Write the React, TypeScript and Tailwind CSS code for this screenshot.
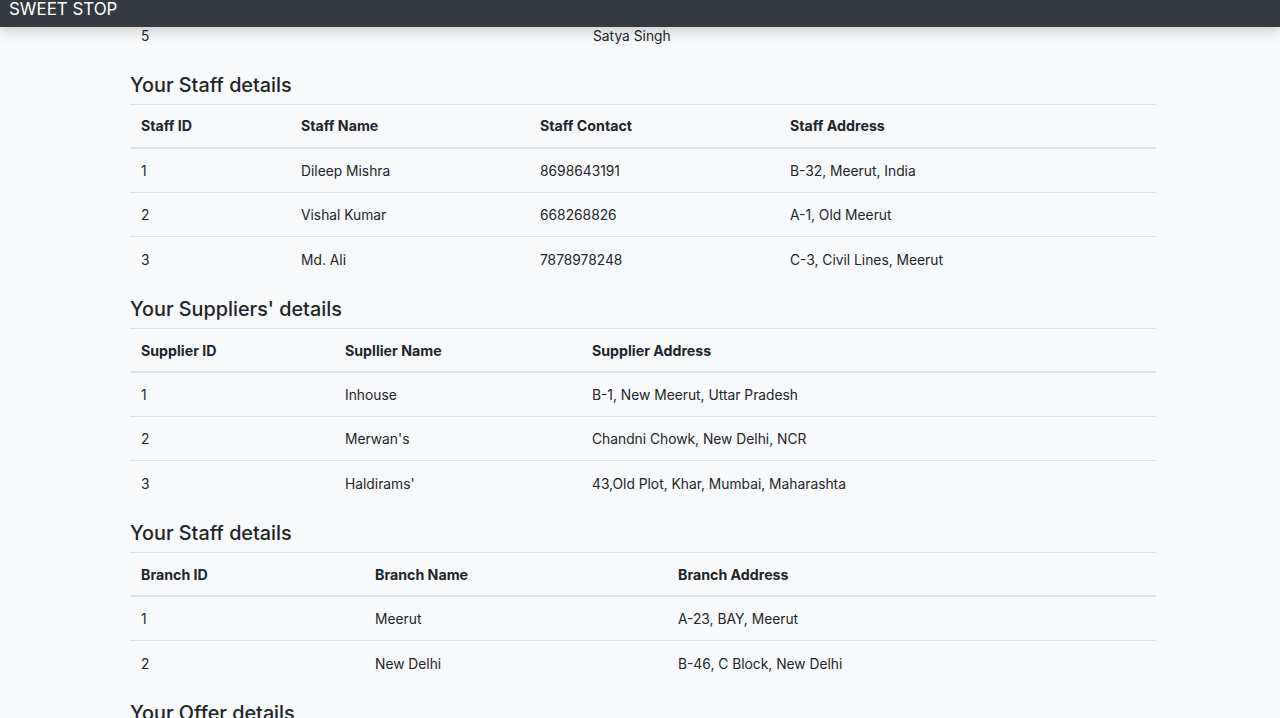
import React from "react";

type Table = {
  title?: string;
  cols: string[];
  widths: string;
  rows: string[][];
};

const tables: Table[] = [
  {
    title: "Your Staff details",
    cols: ["Staff ID", "Staff Name", "Staff Contact", "Staff Address"],
    widths: "160px 239px 250px 1fr",
    rows: [
      ["1", "Dileep Mishra", "8698643191", "B-32, Meerut, India"],
      ["2", "Vishal Kumar", "668268826", "A-1, Old Meerut"],
      ["3", "Md. Ali", "7878978248", "C-3, Civil Lines, Meerut"],
    ],
  },
  {
    title: "Your Suppliers' details",
    cols: ["Supplier ID", "Supllier Name", "Supplier Address"],
    widths: "204px 247px 1fr",
    rows: [
      ["1", "Inhouse", "B-1, New Meerut, Uttar Pradesh"],
      ["2", "Merwan's", "Chandni Chowk, New Delhi, NCR"],
      ["3", "Haldirams'", "43,Old Plot, Khar, Mumbai, Maharashta"],
    ],
  },
  {
    title: "Your Staff details",
    cols: ["Branch ID", "Branch Name", "Branch Address"],
    widths: "234px 303px 1fr",
    rows: [
      ["1", "Meerut", "A-23, BAY, Meerut"],
      ["2", "New Delhi", "B-46, C Block, New Delhi"],
    ],
  },
];

function DataTable({ t }: { t: Table }) {
  return (
    <div className="mb-[14.5px]">
      {/* header */}
      <div
        className="grid h-[45px] items-center border-t border-b-2 border-[#dee2e6] text-[14.2px] font-bold"
        style={{ gridTemplateColumns: t.widths }}
      >
        {t.cols.map((c) => (
          <div key={c} className="px-[11px] pt-[1px]">
            {c}
          </div>
        ))}
      </div>
      {/* body */}
      <div className="divide-y divide-[#dee2e6]">
        {t.rows.map((r, i) => (
          <div
            key={i}
            className="grid h-[44px] items-center"
            style={{ gridTemplateColumns: t.widths }}
          >
            {r.map((cell, j) => (
              <div key={j} className="px-[11px] pt-[3px]">
                {cell}
              </div>
            ))}
          </div>
        ))}
      </div>
    </div>
  );
}

export default function App() {
  return (
    <div className="relative h-[718px] overflow-hidden bg-[#f8f9fa] text-[#212529] font-['Inter','Liberation_Sans',sans-serif] text-[13.8px]">
      {/* Navbar */}
      <div className="absolute top-0 left-0 right-0 z-10 h-[27px] bg-[#343a40] pl-[9px] shadow-[0_4px_14px_rgba(0,0,0,0.18)]">
        <span className="text-[16.9px] leading-[19px] text-white">SWEET STOP</span>
      </div>

      <div className="ml-[130px] w-[1026px] pt-[13px]">
        {/* tail of the previous table */}
        <div className="mb-[14px] grid h-[44px] items-center border-t border-[#dee2e6]" style={{ gridTemplateColumns: "452px 1fr" }}>
          <div className="px-[11px] pt-[2px]">5</div>
          <div className="px-[11px] pt-[2px]">Satya Singh</div>
        </div>

        {tables.map((t, i) => (
          <div key={i}>
            <h4 className="mb-[5.5px] pt-[1.5px] text-[19.8px] leading-[25.6px] font-medium">{t.title}</h4>
            <DataTable t={t} />
          </div>
        ))}

        <h4 className="mb-[5.5px] pt-[1.5px] text-[19.8px] leading-[25.6px] font-medium">Your Offer details</h4>
      </div>
    </div>
  );
}
